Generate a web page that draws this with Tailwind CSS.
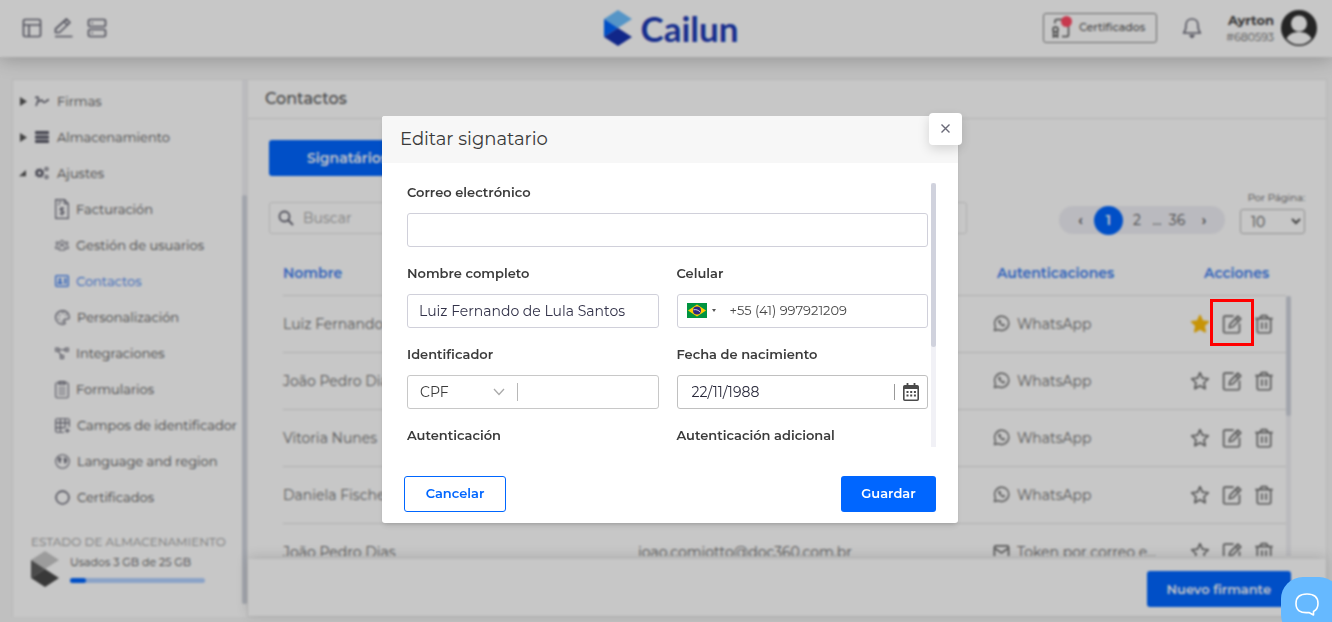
<!DOCTYPE html>
<html lang="es">
<head>
    <meta charset="UTF-8">
    <meta name="viewport" content="width=device-width, initial-scale=1.0">
    <title>Cailun - Contactos</title>
    <script src="https://cdn.jsdelivr.net/npm/@tailwindcss/browser@4"></script>
</head>
<body class="h-screen overflow-hidden bg-[#f6f6f6] font-['Montserrat','Inter',sans-serif] text-sm text-[#555]">

    <!-- Shared icons -->
    <svg class="hidden">
        <symbol id="i-whatsapp" viewBox="0 0 24 24" fill="none" stroke="currentColor" stroke-width="2" stroke-linejoin="round">
            <path d="M2 22l1.500-5.500A10 10 0 1 1 7.500 20.500z"/>
            <path d="M8.500 7c-1.200 1.200-.5 3.800 1.800 6.100s5 3.100 6.200 1.900l-.4-1.400-2-.8-1.100.9c-1.200-.5-2.300-1.600-2.800-2.800l.9-1.100-.8-2z" fill="currentColor" stroke-width="1"/>
        </symbol>
        <symbol id="i-mail" viewBox="0 0 24 24" fill="none" stroke="currentColor" stroke-width="2.400" stroke-linejoin="round">
            <rect x="2" y="4" width="20" height="17" rx="2"/>
            <path d="M2 7l10 7 10-7"/>
        </symbol>
        <symbol id="i-star" viewBox="0 0 24 24" stroke="currentColor" stroke-width="2" stroke-linejoin="round">
            <path d="M12 2l2.900 6.500 7.100.8-5.200 4.800 1.400 7.200-6.200-3.600-6.200 3.600 1.400-7.200L2 9.300l7.100-.8z"/>
        </symbol>
        <symbol id="i-edit" viewBox="0 0 24 24" fill="none" stroke="currentColor" stroke-width="2" stroke-linejoin="round">
            <path d="M14 2.500H3.500A1.500 1.500 0 0 0 2 4v17a1.500 1.500 0 0 0 1.500 1.500h16A1.500 1.500 0 0 0 21 21v-9.500"/>
            <path d="M9.500 12.500L19 2.500l3.500 3.300-9.600 9.800-4.200.9z"/>
            <path d="M16.500 5.500l3 3"/>
        </symbol>
        <symbol id="i-trash" viewBox="0 0 24 24" fill="none" stroke="currentColor" stroke-width="2" stroke-linejoin="round">
            <path d="M1.500 5.500h21M4 5.500V21a1.500 1.500 0 0 0 1.500 1.500h13A1.500 1.500 0 0 0 20 21V5.500M7 5l2-3h6l2 3M9.500 10v8M14.500 10v8"/>
        </symbol>
    </svg>

    <div class="flex h-full flex-col">
        <!-- Header -->
        <header class="relative grid h-[57px] shrink-0 grid-cols-[1fr_auto_1fr] items-center bg-white pr-[15px] pb-[2px] pl-[21px] shadow-[0_2px_18px_rgba(0,0,0,0.25)]">
            <nav class="flex items-center gap-[10px] text-[#6a6a78]">
                <button aria-label="Panel">
                    <svg class="size-[22px]" viewBox="0 0 22 22" fill="none" stroke="currentColor" stroke-width="1.700"><rect x="2.500" y="2.500" width="17" height="17" rx="1.500"/><path d="M2.500 8h17M8 8v11.500"/></svg>
                </button>
                <button aria-label="Firmar">
                    <svg class="size-[22px]" viewBox="0 0 22 22" fill="none" stroke="currentColor" stroke-width="1.700" stroke-linejoin="round"><path d="M2.500 15.500v-3.500L13.500 2l3.500 3.500L6.500 15.500zM11 4.500L14.500 8M2 19.500h17.500"/></svg>
                </button>
                <button aria-label="Almacenamiento">
                    <svg class="size-[24px]" viewBox="0 0 24 24" fill="none" stroke="currentColor" stroke-width="1.700"><rect x="3.500" y="3.500" width="17" height="7" rx="1.500"/><rect x="3.500" y="13.500" width="17" height="7" rx="1.500"/><path d="M6.500 7h1.500M6.500 17h1.500"/></svg>
                </button>
            </nav>
            <a href="#" class="flex items-center gap-[9px] pl-1">
                <svg class="h-9 w-7" viewBox="0 0 28 36"><path d="M14 0l14 9-14 9L0 9z" fill="#6dbfff"/><path d="M0 9l14 9L0 27z" fill="#06f"/><path d="M14 18l14 9-14 9L0 27z" fill="#1632b0"/></svg>
                <span class="font-['Lato',sans-serif] text-[35px] leading-9 font-bold text-[#1c3ab5]">Cailun</span>
            </a>
            <div class="flex items-center justify-end">
                <button class="relative flex h-[30px] items-center gap-2 rounded-[3px] border border-[#888] pr-[11px] pl-[7px] text-[11px] font-medium">
                    <svg class="size-5" viewBox="0 0 20 20" fill="none" stroke="currentColor" stroke-width="1.500"><path d="M4 5.500V3a1.500 1.500 0 0 1 1.500-1.500H16A1.500 1.500 0 0 1 17.500 3v14a1.500 1.500 0 0 1-1.500 1.500h-5"/><circle cx="4.500" cy="11.500" r="2.500"/><path d="M2.500 13.500V19l2-1.500 2 1.500v-5.500"/></svg>
                    <span class="absolute top-[2px] left-[17px] size-[11px] rounded-full bg-[#ff4a64]"></span>
                    Certificados
                </button>
                <button aria-label="Notificaciones" class="ml-6 text-[#6a6a78]">
                    <svg class="size-[22px]" viewBox="0 0 22 22" fill="none" stroke="currentColor" stroke-width="1.600" stroke-linejoin="round"><path d="M2.500 16c1.500-1.500 2.500-3 2.500-8 0-3.500 2.500-6 6-6s6 2.500 6 6c0 5 1 6.500 2.500 8z"/><path d="M9 18.500h4l-2 2z" fill="currentColor"/></svg>
                </button>
                <div class="ml-[23px] text-right text-[#444]">
                    <p class="text-[13px] leading-[18px] font-bold">Ayrton</p>
                    <p class="text-[11px] leading-4 text-[#666]">#680593</p>
                </div>
                <button aria-label="Perfil" class="ml-[7px]">
                    <svg class="size-9" viewBox="0 0 36 36"><circle cx="18" cy="18" r="18" fill="#303030"/><circle cx="18" cy="13.500" r="8" fill="#fff"/><path d="M5.500 28.500C8 24 12.500 22 18 22s10 2 12.500 6.500A16 16 0 0 1 18 34.500a16 16 0 0 1-12.500-6z" fill="#fff"/></svg>
                </button>
            </div>
        </header>

        <main class="flex min-h-0 flex-1 pt-[22px] pr-[5px] pb-[5px] pl-3">
            <!-- Sidebar -->
            <aside class="flex w-[235px] shrink-0 border-t border-l border-[#ececec] bg-white">
                <div class="flex min-w-0 flex-1 flex-col pt-[3px] text-[13px] whitespace-nowrap">
                    <a href="#" class="flex h-9 items-center pl-[7px]">
                        <svg class="h-[9px] w-[7px]" viewBox="0 0 7 9" fill="currentColor"><path d="M0 0l7 4.500L0 9z"/></svg>
                        <svg class="mr-2 ml-2 size-[14px] text-[#5a5a68]" viewBox="0 0 14 14" fill="none" stroke="currentColor" stroke-width="1.500"><path d="M0 4c3-2 4-.5 3 2.500S1.500 11 1 12M4 8c2-2.500 3-2.500 3.500-1S9.500 9 11 7.500s2-1.500 3-2"/></svg>
                        Firmas
                    </a>
                    <a href="#" class="flex h-9 items-center pl-[7px]">
                        <svg class="h-[9px] w-[7px]" viewBox="0 0 7 9" fill="currentColor"><path d="M0 0l7 4.500L0 9z"/></svg>
                        <svg class="mr-2 ml-2 size-[14px] text-[#5a5a68]" viewBox="0 0 14 14" fill="currentColor"><rect y="1" width="14" height="3.300" rx="1"/><rect y="5.400" width="14" height="3.300" rx="1"/><rect y="9.800" width="14" height="3.300" rx="1"/></svg>
                        Almacenamiento
                    </a>
                    <a href="#" class="flex h-9 items-center pl-[6px]">
                        <svg class="size-[7px]" viewBox="0 0 8 8" fill="currentColor"><path d="M8 0v7H0z"/></svg>
                        <svg class="mr-2 ml-[9px] size-[14px] text-[#5a5a68]" viewBox="0 0 14 14" fill="none" stroke="currentColor"><circle cx="4.500" cy="7" r="2.700" stroke-width="2"/><circle cx="4.500" cy="7" r="4" stroke-width="1.500" stroke-dasharray="1.600 1.500"/><circle cx="11.500" cy="3" r="1.500" stroke-width="1.200"/><circle cx="11.500" cy="11" r="1.500" stroke-width="1.200"/></svg>
                        Ajustes
                    </a>
                    <a href="#" class="flex h-9 items-center gap-[7px] pl-[42px]">
                        <svg class="h-5 w-[14px] text-[#6a6a78]" viewBox="0 0 14 20" fill="none" stroke="currentColor" stroke-width="1.200"><path d="M.7.700h8.800l3.800 4v14.600H.7zM9.500.700v4h3.800M3 3h4M3 5.500h2"/><path d="M9 9.500c-1-1-4-1-4 .8s4 1 4 3-3 2-4.200.7M7 8v8.500"/></svg>
                        Facturación
                    </a>
                    <a href="#" class="flex h-9 items-center gap-[7px] pl-[42px]">
                        <svg class="size-[14px] text-[#6a6a78]" viewBox="0 0 14 14" fill="none" stroke="currentColor"><circle cx="7" cy="4.500" r="2"/><path d="M4 12V9.500c0-1 1-1.800 3-1.800s3 .8 3 1.800V12z"/><circle cx="2.300" cy="5" r="1.200"/><circle cx="11.700" cy="5" r="1.200"/><path d="M3.500 10.500H.7V9c0-1 .8-1.500 2.300-1.500M10.500 10.500h2.800V9c0-1-.8-1.500-2.300-1.500"/></svg>
                        Gestión de usuarios
                    </a>
                    <a href="#" class="flex h-9 items-center gap-[7px] pl-[42px] text-[#3a7cf0]">
                        <svg class="size-[14px]" viewBox="0 0 14 14" fill="none" stroke="currentColor" stroke-width="1.300"><rect x=".7" y="1.700" width="12.600" height="10.600" rx="1"/><circle cx="5" cy="5.500" r="1.500" fill="currentColor" stroke="none"/><path d="M2.500 10c0-2 1-2.500 2.500-2.500S7.500 8 7.500 10z" fill="currentColor" stroke="none"/><path d="M9 5h2.500M9 7h2.500M9 9h2.500"/></svg>
                        Contactos
                    </a>
                    <a href="#" class="flex h-9 items-center gap-[7px] pl-[42px]">
                        <svg class="size-[15px] text-[#6a6a78]" viewBox="0 0 14 14" fill="none" stroke="currentColor" stroke-width="1.200"><path d="M7 .7a6.300 6.300 0 1 0 1.800 12.300c1.200-.4.300-1.800-.3-2.700-.5-1.200.5-2 2-1.800 2 .3 2.800-.5 2.800-1.700C13.200 3.200 10.500.7 7 .7z"/><path d="M3 8.500h1.300M3.500 5h1.300M6.500 3h1.300M9.500 4.500h1.300M6 11h1.300"/></svg>
                        Personalización
                    </a>
                    <a href="#" class="flex h-9 items-center gap-[7px] pl-[42px]">
                        <svg class="size-[14px] text-[#6a6a78]" viewBox="0 0 14 14" fill="none" stroke="currentColor" stroke-width="1.100"><rect x=".7" y="2.200" width="3" height="3"/><rect x="10.300" y="2.200" width="3" height="3"/><rect x="5.500" y="9.500" width="3" height="3"/><path d="M3.700 3.700h6.600M3.300 5.200l3 4.300"/></svg>
                        Integraciones
                    </a>
                    <a href="#" class="flex h-9 items-center gap-[7px] pl-[42px]">
                        <svg class="h-[19px] w-[14px] text-[#6a6a78]" viewBox="0 0 14 18" fill="none" stroke="currentColor" stroke-width="1.100"><rect x=".7" y="2.200" width="12.600" height="15" rx="1.500"/><path d="M4 1h6v3H4zM3.500 7.500h7M3.500 10.500h7M3.500 13.500h7"/></svg>
                        Formularios
                    </a>
                    <a href="#" class="flex h-9 items-center gap-[7px] pl-[42px]">
                        <svg class="size-[15px] text-[#6a6a78]" viewBox="0 0 14 14" fill="none" stroke="currentColor" stroke-width="1.100"><path d="M8.500 13.300H2A1.300 1.300 0 0 1 .7 12V2A1.300 1.300 0 0 1 2 .7h10A1.300 1.300 0 0 1 13.300 2v6.500M.7 4.500h12.600M5 .7v12.600M9.500.700V9M.7 9h8.500M11.500 9.500v4.500M9.300 11.800h4.500"/></svg>
                        Campos de identificador
                    </a>
                    <a href="#" class="flex h-9 items-center gap-[7px] pl-[42px]">
                        <svg class="size-[15px] text-[#6a6a78]" viewBox="0 0 14 14" fill="none" stroke="currentColor"><circle cx="7" cy="7" r="6.300"/><path d="M3 3.500l2.500.2.500 1.300-1.500 1 1 1.500-1 1-1-2zM8.500 3.500l1.800.5.700 2.500-1.500 2.500-.8-1.500V5.500z" fill="currentColor" stroke-width=".6"/></svg>
                        Language and region
                    </a>
                    <a href="#" class="flex h-9 items-center gap-[7px] pl-[42px]">
                        <svg class="size-[15px] text-[#6a6a78]" viewBox="0 0 14 14" fill="none" stroke="currentColor" stroke-width="1.500"><circle cx="7" cy="7" r="6"/></svg>
                        Certificados
                    </a>

                    <div class="mt-[18px] pl-[18px]">
                        <p class="text-[12px] leading-[18px] text-[#999]">ESTADO DE ALMACENAMIENTO</p>
                        <div class="flex items-start gap-[11px]">
                            <svg class="h-9 w-7" viewBox="0 0 28 36"><path d="M14 0l14 9-14 9L0 9z" fill="#c8c8c8"/><path d="M0 9l14 9L0 27z" fill="#606060"/><path d="M14 18l14 9-14 9L0 27z" fill="#4a4a4a"/></svg>
                            <div class="w-[135px] pt-[3px]">
                                <p class="text-[11px] leading-4">Usados 3 GB de 25 GB</p>
                                <div class="mt-2 h-[5px] rounded-full bg-[#b3d1ff]">
                                    <div class="h-full w-[12%] rounded-full bg-[#06f]"></div>
                                </div>
                            </div>
                        </div>
                    </div>
                </div>
                <div class="mb-[13px] w-[5px] bg-[#f0f0f4] pt-[115px]">
                    <div class="h-full rounded-full bg-[#d0d4dd]"></div>
                </div>
            </aside>

            <!-- Content -->
            <section class="flex min-w-0 flex-1 flex-col border border-[#ececec] bg-white">
                <h1 class="h-[39px] shrink-0 border-b border-[#e6e6e6] pl-[17px] text-base leading-[38px] font-medium">Contactos</h1>
                <div class="flex min-h-0 flex-1 flex-col px-[21px] pt-[21px]">
                    <div>
                        <button class="h-9 rounded-[3px] bg-[#06f] px-[38px] text-sm font-semibold text-white">Signatários</button>
                    </div>
                    <div class="mt-[13px] flex items-end">
                        <label class="flex h-8 max-w-[698px] flex-1 items-center gap-2 rounded-[3px] border border-[#e2e2e2] px-[7px]">
                            <svg class="size-[18px] text-[#666674]" viewBox="0 0 18 18" fill="none" stroke="currentColor" stroke-width="1.800"><circle cx="7.500" cy="7.500" r="5"/><path d="M11 11l5 5"/></svg>
                            <input type="text" placeholder="Buscar" class="min-w-0 flex-1 text-sm outline-none placeholder:text-[#a5a5a5]">
                        </label>
                        <div class="ml-auto flex h-7 items-center rounded-full bg-[#efeff5] text-sm">
                            <button class="w-[35px] pl-2 font-semibold" aria-label="Anterior">‹</button>
                            <button class="size-[29px] rounded-full bg-[#06f] font-semibold text-white">1</button>
                            <button class="w-7">2</button>
                            <span class="w-3 text-center">...</span>
                            <button class="w-7">36</button>
                            <button class="w-[34px] pr-2 font-semibold" aria-label="Siguiente">›</button>
                        </div>
                        <div class="ml-[15px] flex w-[65px] flex-col items-end">
                            <label for="per-page" class="mb-[2px] text-[10px] leading-[18px] whitespace-nowrap">Por Página:</label>
                            <select id="per-page" class="h-[25px] w-full rounded-[3px] border border-[#bbb] bg-white pl-[6px] text-sm"><option>10</option></select>
                        </div>
                    </div>

                    <div class="mb-[3px] flex min-h-0 flex-1 overflow-hidden px-[14px]">
                        <table class="w-full table-fixed text-left text-sm text-[#707070]">
                            <thead>
                                <tr class="h-[61px] border-b border-[#e2e2e2] align-bottom text-[#3a7cf0]">
                                    <th class="w-[355px] pb-[10px] leading-6 font-semibold">Nombre</th>
                                    <th class="pb-[10px] leading-6 font-semibold"></th>
                                    <th class="w-[197px] pb-[10px] pl-1 leading-6 font-semibold">Autenticaciones</th>
                                    <th class="w-[96px] pb-[10px] pl-[14px] leading-6 font-semibold">Acciones</th>
                                </tr>
                            </thead>
                            <tbody>
                                <tr class="h-[57px] border-b border-[#e2e2e2]">
                                    <td>Luiz Fernando de Lula Santos</td>
                                    <td></td>
                                    <td><span class="flex items-center gap-[7px]"><svg class="size-[17px]"><use href="#i-whatsapp"/></svg>WhatsApp</span></td>
                                    <td>
                                        <div class="flex gap-3">
                                            <button aria-label="Favorito" class="text-[#ffbe0a]"><svg class="size-5" fill="currentColor"><use href="#i-star"/></svg></button>
                                            <button aria-label="Editar"><svg class="size-5"><use href="#i-edit"/></svg></button>
                                            <button aria-label="Eliminar"><svg class="size-5"><use href="#i-trash"/></svg></button>
                                        </div>
                                    </td>
                                </tr>
                                <tr class="h-[57px] border-b border-[#e2e2e2]">
                                    <td>João Pedro Dias</td>
                                    <td></td>
                                    <td><span class="flex items-center gap-[7px]"><svg class="size-[17px]"><use href="#i-whatsapp"/></svg>WhatsApp</span></td>
                                    <td>
                                        <div class="flex gap-3">
                                            <button aria-label="Favorito"><svg class="size-5" fill="none"><use href="#i-star"/></svg></button>
                                            <button aria-label="Editar"><svg class="size-5"><use href="#i-edit"/></svg></button>
                                            <button aria-label="Eliminar"><svg class="size-5"><use href="#i-trash"/></svg></button>
                                        </div>
                                    </td>
                                </tr>
                                <tr class="h-[57px] border-b border-[#e2e2e2]">
                                    <td>Vitoria Nunes</td>
                                    <td></td>
                                    <td><span class="flex items-center gap-[7px]"><svg class="size-[17px]"><use href="#i-whatsapp"/></svg>WhatsApp</span></td>
                                    <td>
                                        <div class="flex gap-3">
                                            <button aria-label="Favorito"><svg class="size-5" fill="none"><use href="#i-star"/></svg></button>
                                            <button aria-label="Editar"><svg class="size-5"><use href="#i-edit"/></svg></button>
                                            <button aria-label="Eliminar"><svg class="size-5"><use href="#i-trash"/></svg></button>
                                        </div>
                                    </td>
                                </tr>
                                <tr class="h-[57px] border-b border-[#e2e2e2]">
                                    <td>Daniela Fischer</td>
                                    <td></td>
                                    <td><span class="flex items-center gap-[7px]"><svg class="size-[17px]"><use href="#i-whatsapp"/></svg>WhatsApp</span></td>
                                    <td>
                                        <div class="flex gap-3">
                                            <button aria-label="Favorito"><svg class="size-5" fill="none"><use href="#i-star"/></svg></button>
                                            <button aria-label="Editar"><svg class="size-5"><use href="#i-edit"/></svg></button>
                                            <button aria-label="Eliminar"><svg class="size-5"><use href="#i-trash"/></svg></button>
                                        </div>
                                    </td>
                                </tr>
                                <tr class="h-[57px]">
                                    <td>João Pedro Dias</td>
                                    <td>joao.comiotto@doc360.com.br</td>
                                    <td><span class="flex items-center gap-[7px]"><svg class="size-[17px]"><use href="#i-mail"/></svg>Token por correo e...</span></td>
                                    <td>
                                        <div class="flex gap-3">
                                            <button aria-label="Favorito"><svg class="size-5" fill="none"><use href="#i-star"/></svg></button>
                                            <button aria-label="Editar"><svg class="size-5"><use href="#i-edit"/></svg></button>
                                            <button aria-label="Eliminar"><svg class="size-5"><use href="#i-trash"/></svg></button>
                                        </div>
                                    </td>
                                </tr>
                            </tbody>
                        </table>
                        <div class="mt-[62px] w-[5px] shrink-0 bg-[#f0f0f4]">
                            <div class="h-[120px] rounded-full bg-[#d0d4dd]"></div>
                        </div>
                    </div>
                </div>
                <div class="flex h-[57px] shrink-0 items-center justify-end bg-white pt-[3px] pr-[35px] shadow-[0_-2px_12px_rgba(0,0,0,0.14)]">
                    <button class="h-9 rounded-[3px] bg-[#06f] px-5 text-[13px] font-semibold text-white">Nuevo firmante</button>
                </div>
            </section>
        </main>
    </div>

    <!-- Modal -->
    <div class="fixed inset-0 z-10 flex items-center justify-center bg-black/22 pt-4 pl-2 backdrop-blur-[1px]">
        <div role="dialog" aria-labelledby="modal-title" class="relative w-full max-w-xl rounded-[3px] bg-white text-[#3a3a3a] shadow-md">
            <h2 id="modal-title" class="h-[47px] rounded-t-[3px] bg-[#f7f7f7] pl-[18px] text-lg leading-[46px]">Editar signatario</h2>
            <button aria-label="Cerrar" class="absolute -top-[3px] -right-1 flex h-8 w-[33px] items-center justify-center rounded bg-white text-[#6a6a78] shadow-[0_4px_12px_rgba(0,0,0,0.15)]">
                <svg class="size-[9px]" viewBox="0 0 9 9" fill="none" stroke="currentColor" stroke-width="1.400"><path d="M.5.500l8 8M8.500.500l-8 8"/></svg>
            </button>

            <form class="pb-[11px]">
                <div class="flex h-[284px] gap-[3px] pt-5 pr-[22px] pl-[25px]">
                    <div class="grid flex-1 grid-cols-2 content-start gap-x-[18px] gap-y-[17px] overflow-hidden">
                        <div class="col-span-2">
                            <label for="email" class="mb-3 block text-[13px] leading-[18px] font-semibold">Correo electrónico</label>
                            <input id="email" type="email" class="block h-[34px] w-full rounded-[3px] border border-[#d0d0da] px-[11px] outline-none">
                        </div>
                        <div>
                            <label for="name" class="mb-3 block text-[13px] leading-[18px] font-semibold">Nombre completo</label>
                            <input id="name" type="text" value="Luiz Fernando de Lula Santos" class="block h-[34px] w-full rounded-[3px] border border-[#d0d0da] px-[11px] text-sm text-[#33334a] outline-none">
                        </div>
                        <div>
                            <label for="phone" class="mb-3 block text-[13px] leading-[18px] font-semibold">Celular</label>
                            <div class="flex h-[34px] items-center rounded-[3px] border border-[#d0d0da] pl-[9px]">
                                <button type="button" aria-label="Brasil" class="flex items-center gap-[5px]">
                                    <svg class="h-[15px] w-5" viewBox="0 0 20 15"><path fill="#009440" d="M0 0h20v15H0z"/><path fill="#ffcb00" d="M10 1.500l9 6-9 6-9-6z"/><circle cx="10" cy="7.500" r="4" fill="#302681"/><path d="M6.500 6.800c2.500-.6 5 .3 6.800 2.300" fill="none" stroke="#fff" stroke-width=".8"/></svg>
                                    <svg class="h-[3px] w-1" viewBox="0 0 4 3"><path d="M0 0h4L2 3z" fill="#555"/></svg>
                                </button>
                                <input id="phone" type="tel" value="+55 (41) 997921209" class="ml-[14px] min-w-0 flex-1 text-[13px] text-[#484848] outline-none">
                            </div>
                        </div>
                        <div>
                            <label for="document" class="mb-3 block text-[13px] leading-[18px] font-semibold">Identificador</label>
                            <div class="flex h-[34px] items-center rounded-[3px] border border-[#c8c8c8]">
                                <div class="flex h-[18px] w-[110px] items-center border-r border-[#b8b8b8]">
                                    <select aria-label="Tipo de identificador" class="min-w-0 flex-1 appearance-none pl-3 text-sm outline-none"><option>CPF</option></select>
                                    <svg class="mr-3 h-2 w-3 text-[#aaa]" viewBox="0 0 12 8" fill="none" stroke="currentColor" stroke-width="1.300"><path d="M1 1l5 5.500L11 1"/></svg>
                                </div>
                                <input id="document" type="text" aria-label="Identificador" class="min-w-0 flex-1 px-2 outline-none">
                            </div>
                        </div>
                        <div>
                            <label for="birth" class="mb-3 block text-[13px] leading-[18px] font-semibold">Fecha de nacimiento</label>
                            <div class="flex h-[34px] items-center rounded-[3px] border border-[#c0c0c0] pr-2">
                                <input id="birth" type="text" value="22/11/1988" class="min-w-0 flex-1 pl-[14px] text-sm text-[#2a2a3c] outline-none">
                                <button type="button" aria-label="Abrir calendario" class="flex h-4 items-center border-l border-[#999] pl-2">
                                    <svg class="h-[18px] w-4" viewBox="0 0 16 18" fill="none" stroke="#4a4a4a"><rect x=".8" y="2.800" width="14.400" height="14.400" rx="1" stroke-width="1.600"/><path d="M4.500 0v3M11.500 0v3" stroke-width="1.800"/><path d="M1 4.500h14" stroke-width="3"/><path d="M3.500 9h9.500M3.500 12.500h9.500" stroke-width="2" stroke-dasharray="2 1.700"/></svg>
                                </button>
                            </div>
                        </div>
                        <div>
                            <label for="auth" class="mb-3 block text-[13px] leading-[18px] font-semibold">Autenticación</label>
                            <select id="auth" class="block h-[34px] w-full rounded-[3px] border border-[#d0d0da]"></select>
                        </div>
                        <div>
                            <label for="auth-extra" class="mb-3 block text-[13px] leading-[18px] font-semibold">Autenticación adicional</label>
                            <select id="auth-extra" class="block h-[34px] w-full rounded-[3px] border border-[#d0d0da]"></select>
                        </div>
                    </div>
                    <div class="w-[5px] bg-[#f1f1f6]">
                        <div class="h-[164px] rounded-full bg-[#d0d2dd]"></div>
                    </div>
                </div>
                <div class="flex justify-between px-[22px] pt-[29px]">
                    <button type="button" class="h-9 w-[102px] rounded-[3px] border border-[#06f] text-[13px] font-semibold text-[#06f]">Cancelar</button>
                    <button type="submit" class="h-9 w-[95px] rounded-[3px] bg-[#06f] text-[13px] font-semibold text-white">Guardar</button>
                </div>
            </form>
        </div>
    </div>

    <!-- Highlight over the edit action -->
    <div class="pointer-events-none fixed top-[299px] right-[78px] z-20 h-[47px] w-11 border-3 border-[#f00]"></div>

    <!-- Chat widget -->
    <button aria-label="Chat" class="fixed -right-[9px] -bottom-[15px] z-20 size-[60px] rounded-[22px] bg-[#66b9ff] pr-2 pb-[6px]">
        <svg class="mx-auto size-6" viewBox="0 0 24 24" fill="none" stroke="#fff" stroke-width="1.600" stroke-linejoin="round"><path d="M18.500 19.500V23l-4.500-2.500C5 21.500 1 18 1 11.500S4.500 2 12 2s11 3.500 11 9.500c0 4-1.500 6.500-4.500 8z"/></svg>
    </button>

</body>
</html>
